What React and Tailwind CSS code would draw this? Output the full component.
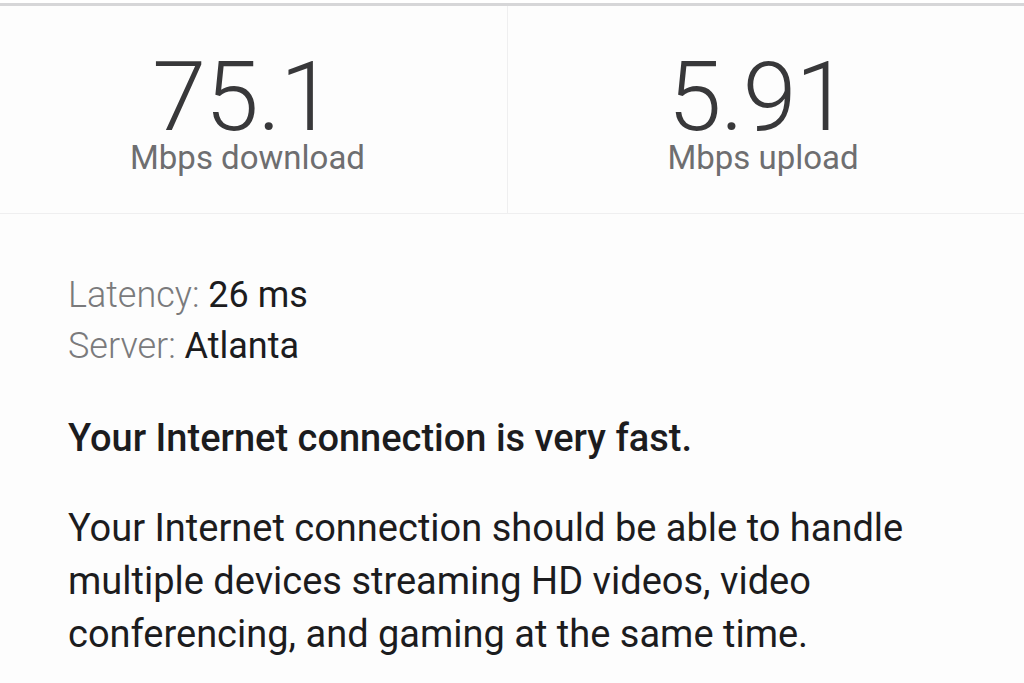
import React from 'react';

const Stat = ({ value, label, className = '' }) => (
  <div className={`flex flex-col items-center pt-[51px] ${className}`}>
    <span className="text-[97px] leading-[80px] font-light text-[#38383a] tracking-[-1px] pr-[10px]">{value}</span>
    <span className="text-[33px] leading-[34px] text-[#6e6e70] mt-[4px]">{label}</span>
  </div>
);

export default function App() {
  return (
    <div
      className="w-[1024px] h-[683px] overflow-hidden bg-[#fdfdfd] text-[#1c1c1e]"
      style={{ fontFamily: 'Roboto, "Helvetica Neue", "Liberation Sans", Arial, sans-serif' }}
    >
      <div className="h-[3px] bg-white" />
      <div className="h-[3px] bg-[#d6d6d8]" />

      {/* speed results */}
      <div className="flex h-[208px] border-b border-[#efeff0]">
        <Stat value="75.1" label="Mbps download" className="w-[508px] border-r border-[#efeff0] pr-[12px]" />
        <Stat value="5.91" label="Mbps upload" className="flex-1 pr-[6px]" />
      </div>

      <div className="px-[68px] pt-[56px]">
        <div className="text-[36px] leading-[51px]">
          <div>
            <span className="text-[#7a7a7c] font-light">Latency: </span>
            <span>26 ms</span>
          </div>
          <div>
            <span className="text-[#7a7a7c] font-light">Server: </span>
            <span>Atlanta</span>
          </div>
        </div>

        <p className="mt-[40px] text-[38px] leading-[53px] font-medium">
          Your Internet connection is very fast.
        </p>

        <p className="mt-[37px] text-[38px] leading-[53px] max-w-[880px]">
          Your Internet connection should be able to handle multiple devices streaming HD videos, video
          conferencing, and gaming at the same time.
        </p>
      </div>
    </div>
  );
}
